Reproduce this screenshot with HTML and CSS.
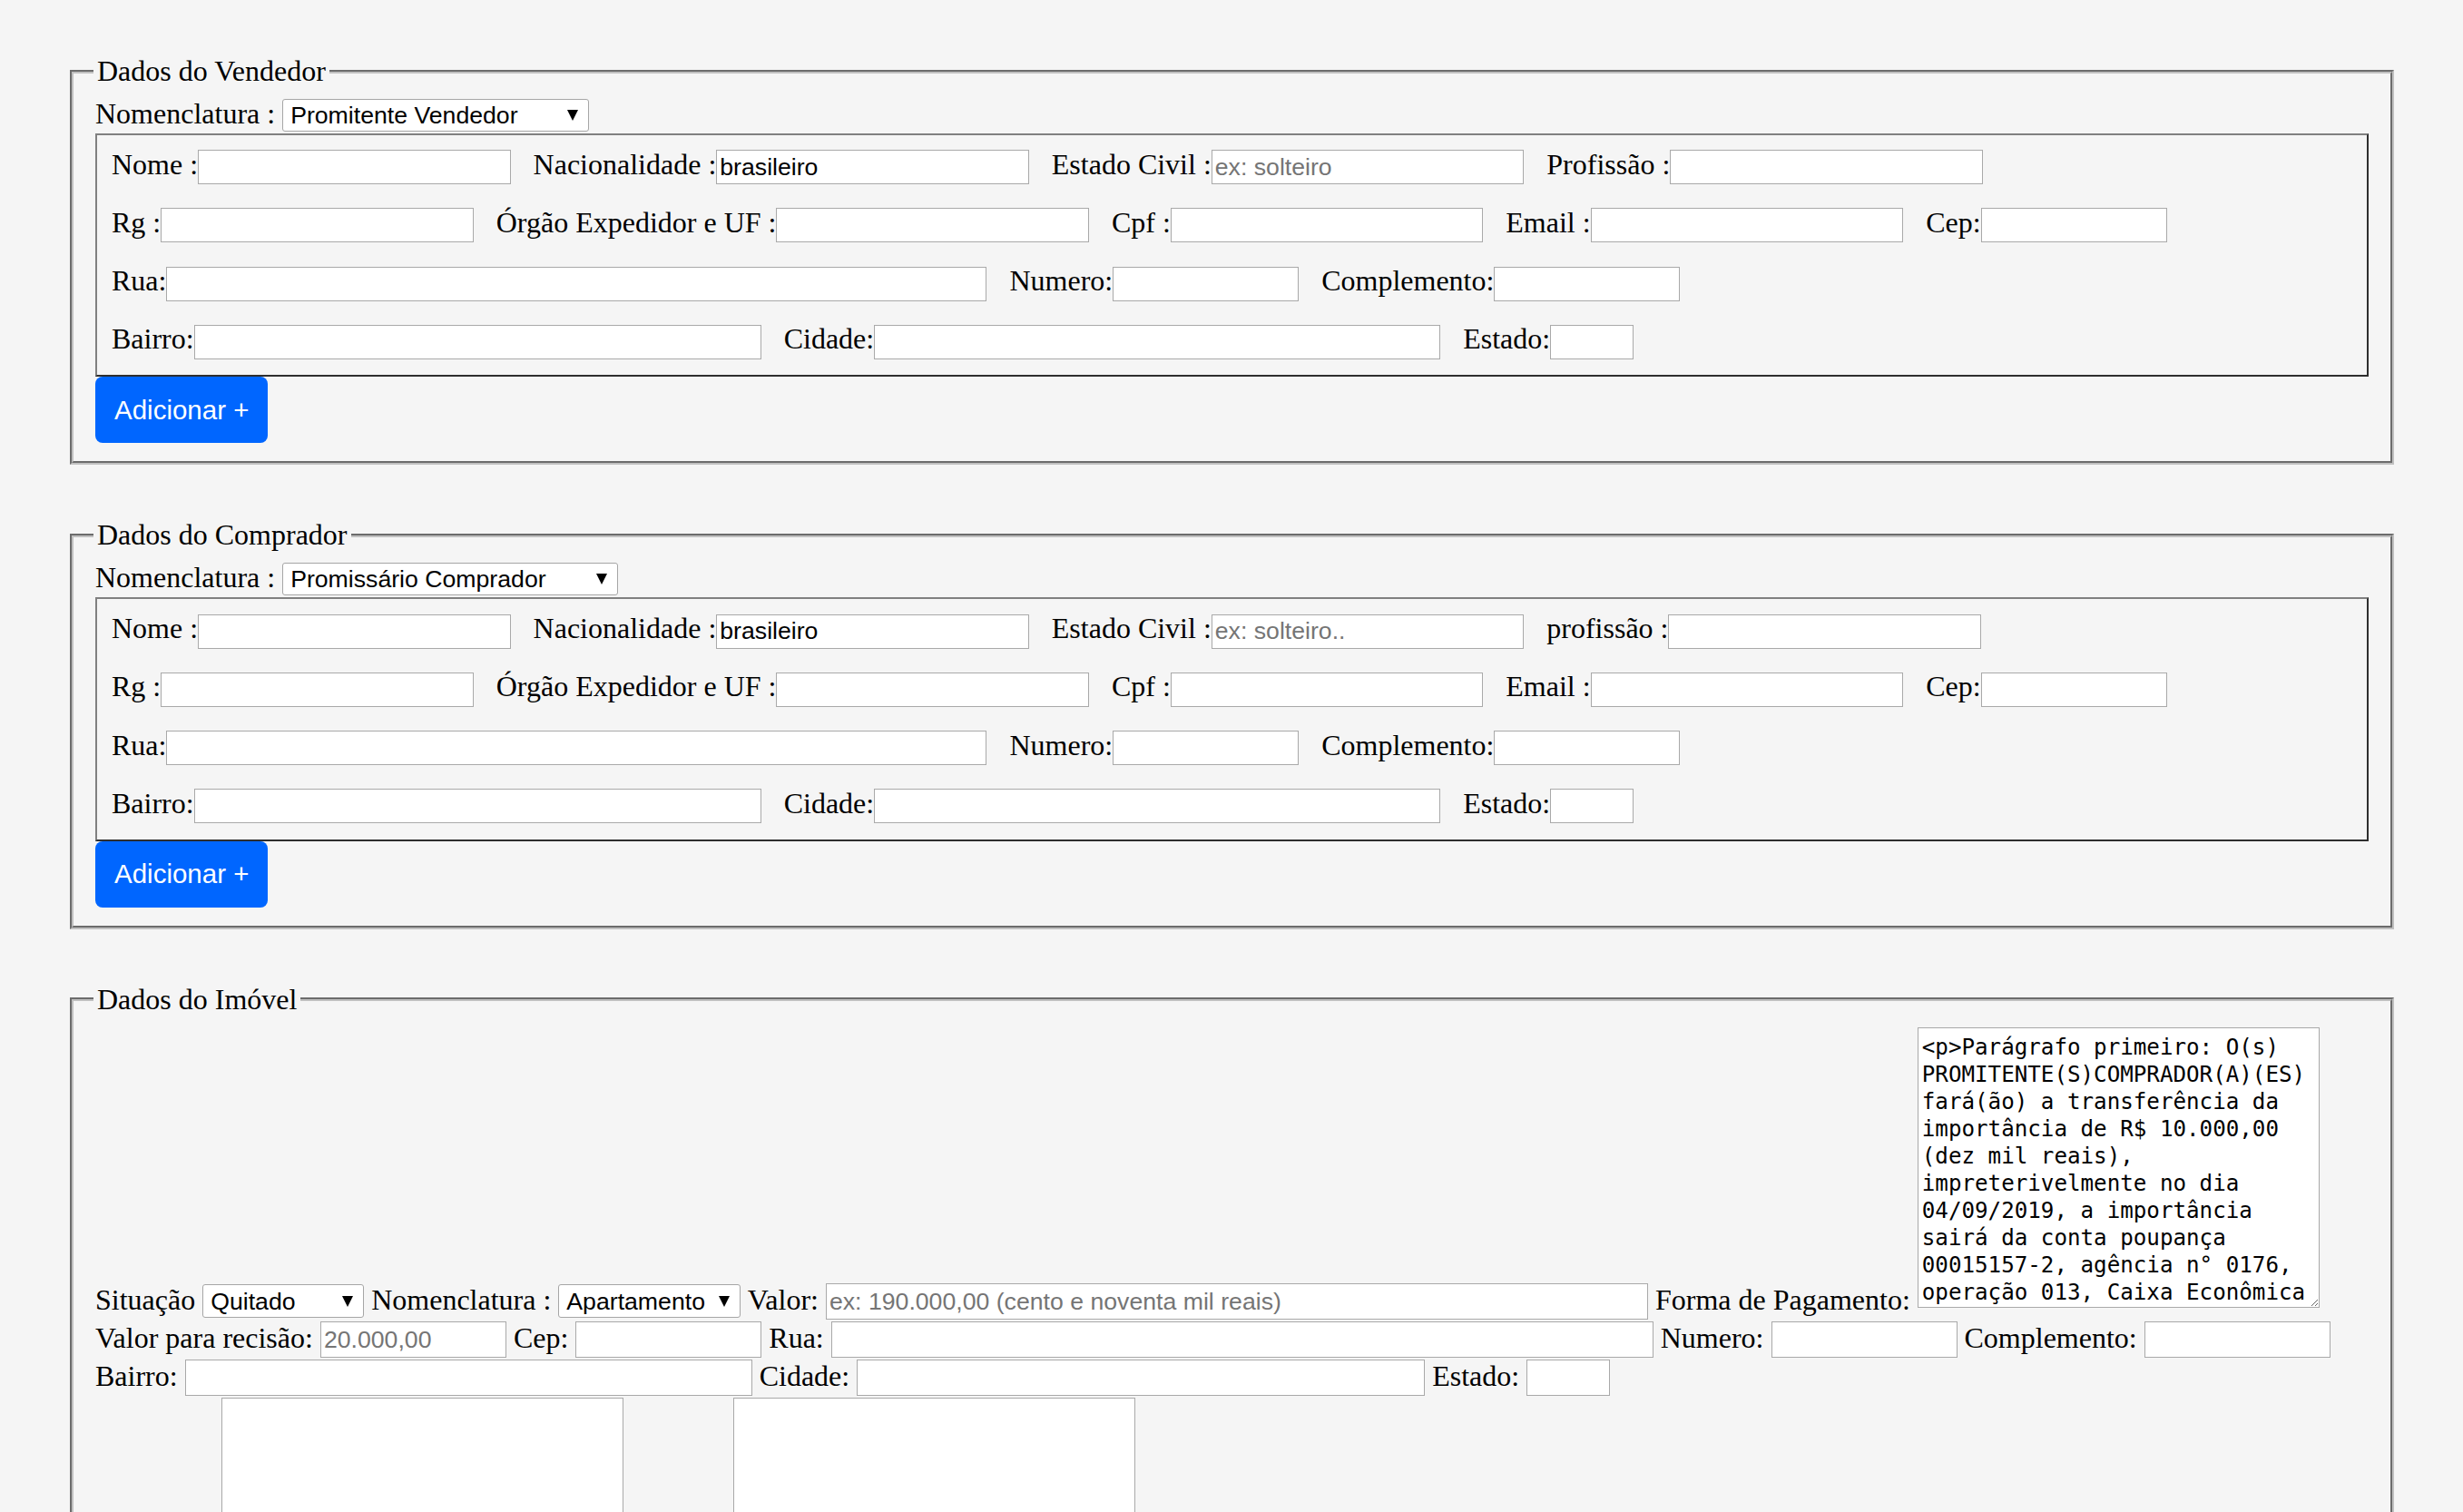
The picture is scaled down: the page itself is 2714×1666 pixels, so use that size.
FILE: index.html
```html
<!DOCTYPE html>
<html lang="pt-BR">
<head>
<meta charset="utf-8">
<title>Contrato</title>
<link rel="stylesheet" href="styles.css">
</head>
<body>
<div class="page">

<fieldset class="fs">
  <legend class="lg">Dados do Vendedor</legend>
  <div class="nomen">Nomenclatura : <span class="selw"><select class="sel s-vend"><option>Promitente Vendedor</option></select></span></div>
  <div class="box">
    <div class="row">
      <div class="grp"><span class="lbl">Nome :</span><input class="in w344" type="text"></div>
      <div class="grp"><span class="lbl">Nacionalidade :</span><input class="in w344" type="text" value="brasileiro"></div>
      <div class="grp"><span class="lbl">Estado Civil :</span><input class="in w344" type="text" placeholder="ex: solteiro"></div>
      <div class="grp"><span class="lbl">Profissão :</span><input class="in w344" type="text"></div>
    </div>
    <div class="row">
      <div class="grp"><span class="lbl">Rg :</span><input class="in w344" type="text"></div>
      <div class="grp"><span class="lbl">Órgão Expedidor e UF :</span><input class="in w344" type="text"></div>
      <div class="grp"><span class="lbl">Cpf :</span><input class="in w344" type="text"></div>
      <div class="grp"><span class="lbl">Email :</span><input class="in w344" type="text"></div>
      <div class="grp"><span class="lbl">Cep:</span><input class="in w205" type="text"></div>
    </div>
    <div class="row">
      <div class="grp"><span class="lbl">Rua:</span><input class="in w904" type="text"></div>
      <div class="grp"><span class="lbl">Numero:</span><input class="in w205" type="text"></div>
      <div class="grp"><span class="lbl">Complemento:</span><input class="in w205" type="text"></div>
    </div>
    <div class="row">
      <div class="grp"><span class="lbl">Bairro:</span><input class="in w625" type="text"></div>
      <div class="grp"><span class="lbl">Cidade:</span><input class="in w624" type="text"></div>
      <div class="grp"><span class="lbl">Estado:</span><input class="in w92" type="text"></div>
    </div>
  </div>
  <button class="btn" type="button">Adicionar +</button>
</fieldset>

<fieldset class="fs">
  <legend class="lg">Dados do Comprador</legend>
  <div class="nomen">Nomenclatura : <span class="selw"><select class="sel s-comp"><option>Promissário Comprador</option></select></span></div>
  <div class="box">
    <div class="row">
      <div class="grp"><span class="lbl">Nome :</span><input class="in w344" type="text"></div>
      <div class="grp"><span class="lbl">Nacionalidade :</span><input class="in w344" type="text" value="brasileiro"></div>
      <div class="grp"><span class="lbl">Estado Civil :</span><input class="in w344" type="text" placeholder="ex: solteiro.."></div>
      <div class="grp"><span class="lbl">profissão :</span><input class="in w344" type="text"></div>
    </div>
    <div class="row">
      <div class="grp"><span class="lbl">Rg :</span><input class="in w344" type="text"></div>
      <div class="grp"><span class="lbl">Órgão Expedidor e UF :</span><input class="in w344" type="text"></div>
      <div class="grp"><span class="lbl">Cpf :</span><input class="in w344" type="text"></div>
      <div class="grp"><span class="lbl">Email :</span><input class="in w344" type="text"></div>
      <div class="grp"><span class="lbl">Cep:</span><input class="in w205" type="text"></div>
    </div>
    <div class="row">
      <div class="grp"><span class="lbl">Rua:</span><input class="in w904" type="text"></div>
      <div class="grp"><span class="lbl">Numero:</span><input class="in w205" type="text"></div>
      <div class="grp"><span class="lbl">Complemento:</span><input class="in w205" type="text"></div>
    </div>
    <div class="row">
      <div class="grp"><span class="lbl">Bairro:</span><input class="in w625" type="text"></div>
      <div class="grp"><span class="lbl">Cidade:</span><input class="in w624" type="text"></div>
      <div class="grp"><span class="lbl">Estado:</span><input class="in w92" type="text"></div>
    </div>
  </div>
  <button class="btn" type="button">Adicionar +</button>
</fieldset>

<fieldset class="fs fs-imovel">
  <legend class="lg">Dados do Imóvel</legend>
  <div class="irow">Situação <span class="selw"><select class="sel s-sm s-quit"><option>Quitado</option></select></span> Nomenclatura : <span class="selw"><select class="sel s-sm s-apt"><option>Apartamento</option></select></span> Valor: <input class="in2 w906" type="text" placeholder="ex: 190.000,00 (cento e noventa mil reais)"> Forma de Pagamento: <textarea class="ta">&lt;p&gt;Parágrafo primeiro: O(s) PROMITENTE(S)COMPRADOR(A)(ES) fará(ão) a transferência da importância de R$ 10.000,00 (dez mil reais), impreterivelmente no dia 04/09/2019, a importância sairá da conta poupança 00015157-2, agência n° 0176, operação 013, Caixa Econômica Federal.&lt;/p&gt;</textarea></div>
  <div class="irow">Valor para recisão: <input class="in2 w205" type="text" placeholder="20.000,00"> Cep: <input class="in2 w205" type="text"> Rua: <input class="in2 w906" type="text"> Numero: <input class="in2 w205" type="text"> Complemento: <input class="in2 w205" type="text"></div>
  <div class="irow">Bairro: <input class="in2 w625" type="text"> Cidade: <input class="in2 w626" type="text"> Estado: <input class="in2 w92" type="text"></div>
  <div class="irow"><textarea class="ta ta-e ta-first"></textarea><textarea class="ta ta-e ta-second"></textarea></div>
</fieldset>

</div>
</body>
</html>
```

FILE: styles.css
```css
html {
  overflow: hidden;
  background: #f5f5f5;
}

body {
  margin: 0;
  background: #f5f5f5;
  color: #000;
  font-family: "Liberation Serif", "Times New Roman", serif;
  font-size: 32px;
}

.page {
  display: flow-root;
  padding: 0 76px 0 77px;
}

.fs {
  margin: 60px 0 0;
  border: 4px groove #c0c0c0;
  padding: 10px 24px 20px;
  min-width: 0;
}

.fs + .fs {
  margin-top: 59px;
}

.lg {
  padding: 0 4px;
  margin-left: -2px;
  font-size: 32px;
}

.nomen {
  white-space: nowrap;
}

.selw {
  display: inline-flex;
  position: relative;
  vertical-align: baseline;
  margin-bottom: 2px;
}

.selw::after {
  content: "";
  position: absolute;
  right: 12px;
  top: 50%;
  margin-top: -6px;
  border-left: 6px solid transparent;
  border-right: 6px solid transparent;
  border-top: 12px solid #000;
  pointer-events: none;
}

.sel {
  -webkit-appearance: none;
  appearance: none;
  margin: 0;
  height: 36px;
  box-sizing: border-box;
  padding: 0 34px 0 8px;
  border: 1px solid #a6a6a6;
  border-radius: 3px;
  background: #fff;
  color: #000;
  font-family: "Liberation Sans", Arial, sans-serif;
  font-size: 26.67px;
}

.s-vend { width: 338px; }
.s-comp { width: 370px; }
.s-sm { height: 37px; }
.s-quit { width: 178px; }
.s-apt { width: 201px; }

.box {
  display: flex;
  flex-direction: column;
  gap: 26.2px;
  border: 2px solid;
  border-color: #808080 #2e2e2e #2e2e2e #808080;
  padding: 16.3px 0 17.3px 16px;
}

.row {
  display: flex;
  align-items: center;
  column-gap: 25px;
  height: 38px;
}

.grp {
  display: flex;
  align-items: center;
  height: 38px;
}

.lbl {
  white-space: nowrap;
  padding-bottom: 6px;
}

.in,
.in2 {
  box-sizing: border-box;
  margin: 0;
  padding: 0 3px;
  border: 1px solid #a9a9a9;
  background: #fff;
  color: #000;
  font-family: "Liberation Sans", Arial, sans-serif;
  font-size: 26.67px;
}

.in { height: 38px; }

.in2 {
  height: 40px;
  margin: 1px 0;
  vertical-align: baseline;
}

.in::placeholder,
.in2::placeholder {
  color: #757575;
}

.w344 { width: 344.5px; }
.w205 { width: 205px; }
.w904 { width: 904px; }
.w906 { width: 906px; }
.w625 { width: 625px; }
.w624 { width: 624px; }
.w626 { width: 626px; }
.w92 { width: 92px; }

.btn {
  display: block;
  margin: 0;
  border: 0;
  border-radius: 8px;
  padding: 14.65px 21px;
  background: #0066ff;
  color: #fff;
  font-family: "Liberation Sans", Arial, sans-serif;
  font-size: 29.5px;
  line-height: 44px;
}

.irow {
  white-space: nowrap;
}

.ta {
  box-sizing: border-box;
  width: 443px;
  height: 309px;
  margin: 2px 0;
  padding: 6px 4px 2px;
  border: 1px solid #a9a9a9;
  background: #fff;
  color: #000;
  font-family: "DejaVu Sans Mono", "Liberation Mono", monospace;
  font-size: 24.2px;
  line-height: 30px;
  white-space: pre-wrap;
  overflow: hidden;
  resize: both;
  vertical-align: baseline;
}

.ta-e {
  margin: 1px 0 2px;
}

.ta-first { margin-left: 139px; }
.ta-second { margin-left: 121px; }
```
